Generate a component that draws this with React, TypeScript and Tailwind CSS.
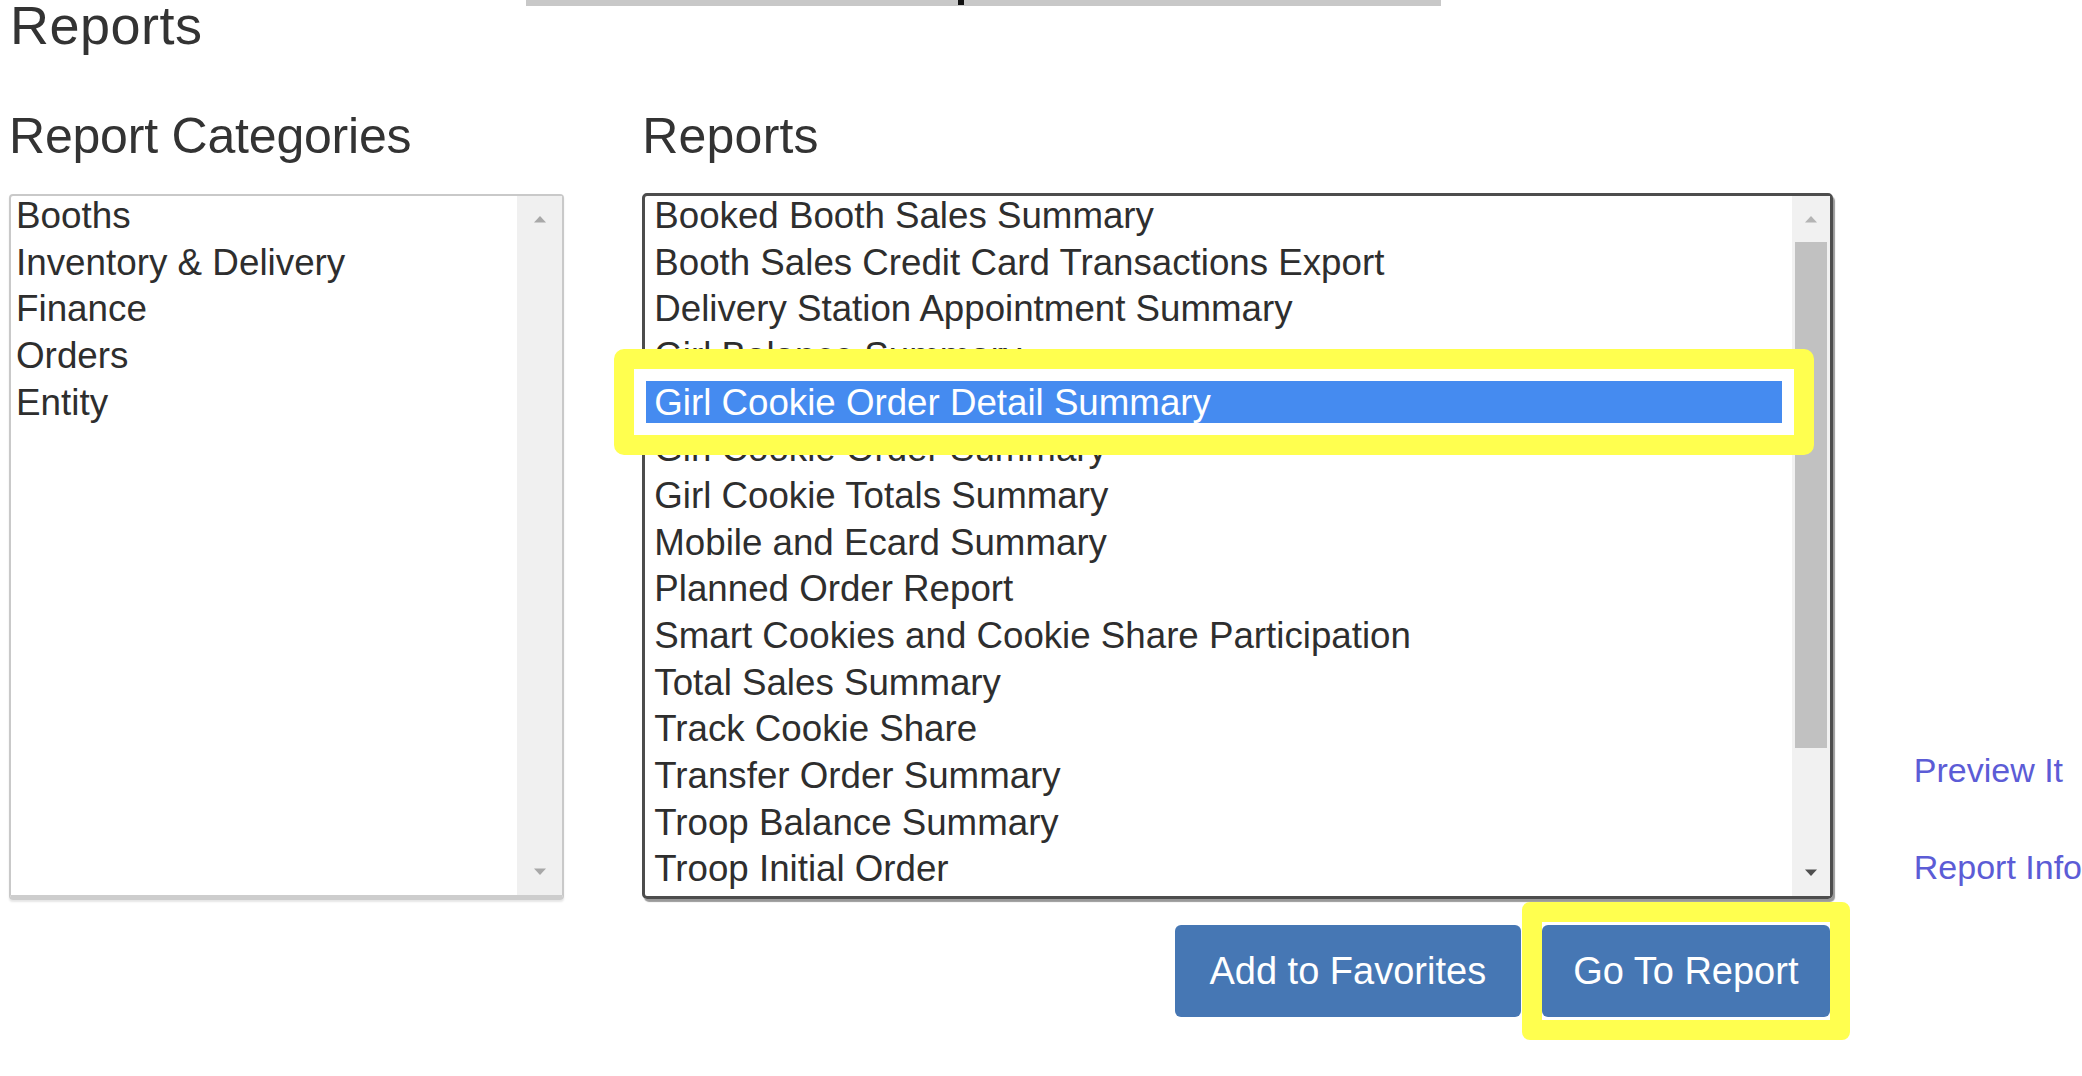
const CATEGORIES = ["Booths", "Inventory & Delivery", "Finance", "Orders", "Entity"];

const REPORTS = [
  "Booked Booth Sales Summary",
  "Booth Sales Credit Card Transactions Export",
  "Delivery Station Appointment Summary",
  "Girl Balance Summary",
  "Girl Cookie Order Detail Summary",
  "Girl Cookie Order Summary",
  "Girl Cookie Totals Summary",
  "Mobile and Ecard Summary",
  "Planned Order Report",
  "Smart Cookies and Cookie Share Participation",
  "Total Sales Summary",
  "Track Cookie Share",
  "Transfer Order Summary",
  "Troop Balance Summary",
  "Troop Initial Order",
];

const SELECTED = "Girl Cookie Order Detail Summary";

function Arrow({ up, color }: { up?: boolean; color: string }) {
  return (
    <svg width="14" height="8" viewBox="0 0 14 8">
      <path d={up ? "M1 7.5 L7 1 L13 7.5 Z" : "M1 0.5 L7 7 L13 0.5 Z"} fill={color} />
    </svg>
  );
}

export default function App() {
  return (
    <div className="relative h-screen w-full overflow-hidden bg-white font-['Liberation_Sans',Arial,sans-serif] text-[#333]">
      {/* page title + cropped bar from the screen above */}
      <div className="flex items-start">
        <h1 className="w-[526px] pl-[10px] pt-[1px] text-[54px] leading-[48px] tracking-[0.5px]">Reports</h1>
        <div className="relative h-[6px] w-[915px] bg-[#c8c8c8]">
          <div className="absolute left-[432px] top-0 h-[5px] w-[6px] bg-[#111]" />
        </div>
      </div>

      <div className="mt-[57px] flex items-start">
        {/* Categories */}
        <div className="ml-[9px] w-[556px]">
          <h2 className="text-[50px] leading-[60px] tracking-[-0.2px]">Report Categories</h2>
          <div className="mt-[28px] flex h-[706px] rounded-[4px] border-2 border-[#c9c9c9] border-b-[5px] border-b-[#cdcdcd] shadow-[0_2px_2px_rgba(0,0,0,0.1)]">
            <ul className="-mt-[3px] flex-1 pl-[5px] text-[36.8px] leading-[46.67px] text-[#2e2e2e]">
              {CATEGORIES.map((c) => (
                <li key={c}>{c}</li>
              ))}
            </ul>
            <div className="flex w-[45px] flex-col items-center bg-[#f0f0f0]">
              <div className="flex h-[46px] items-center">
                <Arrow up color="#a8a8a8" />
              </div>
              <div className="flex-1" />
              <div className="flex h-[46px] items-center">
                <Arrow color="#a8a8a8" />
              </div>
            </div>
          </div>
        </div>

        {/* Reports */}
        <div className="ml-[78px] w-[1192px]">
          <h2 className="text-[50px] leading-[60px] tracking-[0.2px]">Reports</h2>
          <div className="relative mt-[27px] flex h-[706px] rounded-[5px] border-[3px] border-[#4d4d4d] shadow-[2px_3px_1px_rgba(0,0,0,0.4)]">
            <ul className="-mt-[3px] flex-1 text-[36.7px] leading-[46.67px] text-[#2e2e2e]">
              {REPORTS.map((r) => (
                <li
                  key={r}
                  className={
                    r === SELECTED ? "bg-[#458bf0] pl-[9px] whitespace-nowrap text-white" : "pl-[9px] whitespace-nowrap"
                  }
                >
                  {r}
                </li>
              ))}
            </ul>
            <div className="flex w-[38px] flex-col bg-[#f1f1f1]">
              <div className="flex h-[46px] items-center justify-center">
                <Arrow up color="#b4b4b4" />
              </div>
              <div className="mx-[3px] h-[506px] bg-[#c1c1c1]" />
              <div className="flex-1" />
              <div className="flex h-[46px] items-center justify-center">
                <Arrow color="#505050" />
              </div>
            </div>

            {/* highlight annotation */}
            <div className="pointer-events-none absolute left-[-31px] top-[153px] h-[106px] w-[1200px] rounded-[10px] border-[20px] border-[#ffff4f] shadow-[inset_0_0_0_12px_#fff]" />
          </div>

          <div className="mt-[26px] flex justify-end gap-[21px] pr-[3px]">
            <button className="h-[92px] w-[346px] rounded-[6px] bg-[#4677b4] text-[38px] text-white">
              Add to Favorites
            </button>
            <div className="relative">
              <button className="h-[92px] w-[288px] rounded-[6px] bg-[#4677b4] text-[38px] text-white">
                Go To Report
              </button>
              <div className="pointer-events-none absolute -bottom-[23px] -left-[20px] -right-[20px] -top-[23px] rounded-[8px] border-[20px] border-[#ffff4f]" />
            </div>
          </div>
        </div>

        {/* side links */}
        <div className="ml-[81px] mt-[644px] flex flex-col gap-[57px] whitespace-nowrap text-[34px] leading-[40px] text-[#5c5cd6]">
          <a href="#">Preview It</a>
          <a href="#">Report Info</a>
        </div>
      </div>
    </div>
  );
}
